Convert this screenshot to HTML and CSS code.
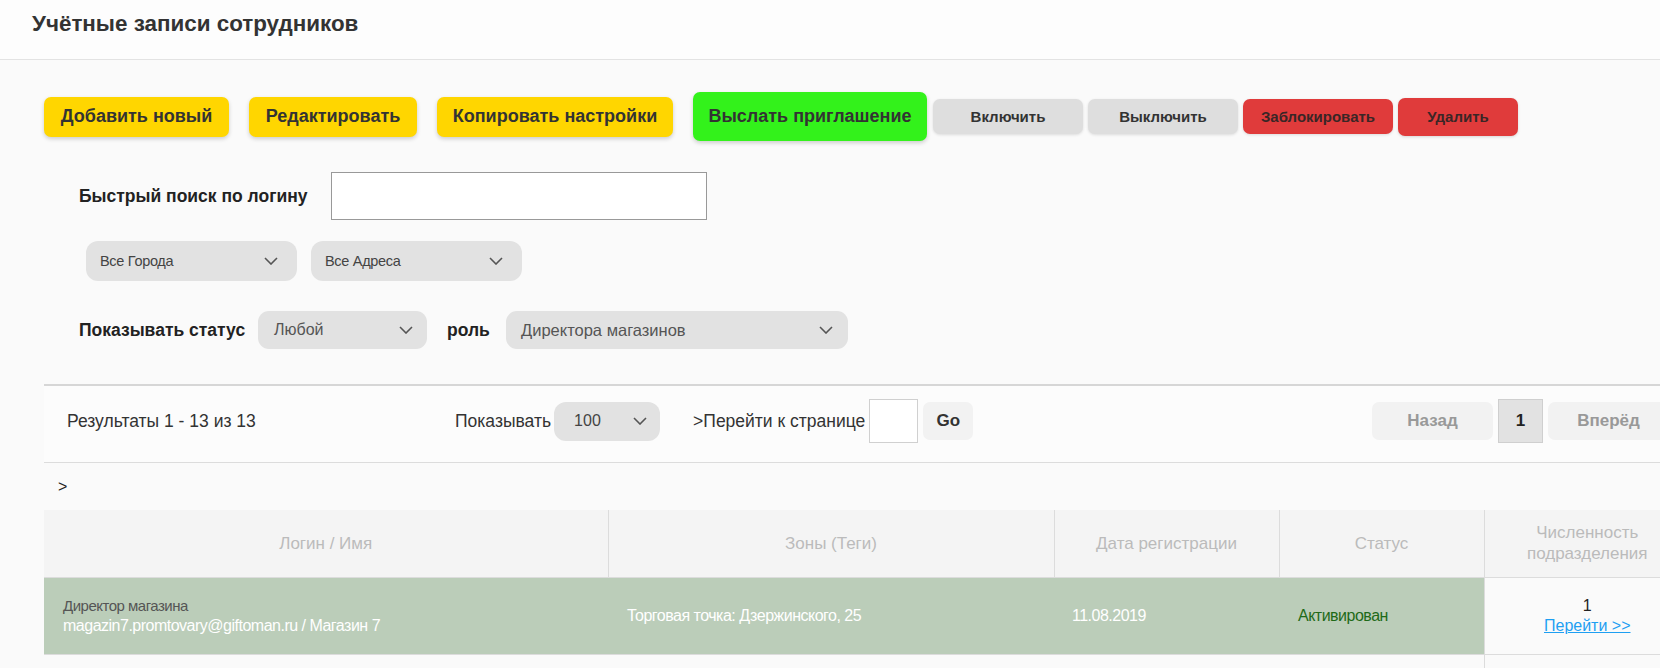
FILE: index.html
```html
<!DOCTYPE html>
<html lang="ru">
<head>
<meta charset="utf-8">
<title>Учётные записи сотрудников</title>
<link rel="stylesheet" href="styles.css">
</head>
<body>
<header class="page-header">
  <h1 class="page-title">Учётные записи сотрудников</h1>
</header>
<main class="content">
  <div class="toolbar">
    <button class="btn btn-yellow btn-add">Добавить новый</button>
    <button class="btn btn-yellow btn-edit">Редактировать</button>
    <button class="btn btn-yellow btn-copy">Копировать настройки</button>
    <button class="btn btn-green">Выслать приглашение</button>
    <button class="btn btn-small btn-gray">Включить</button>
    <button class="btn btn-small btn-gray">Выключить</button>
    <button class="btn btn-small btn-red">Заблокировать</button>
    <button class="btn btn-red btn-delete">Удалить</button>
  </div>

  <div class="search-row">
    <label class="filter-label search-label">Быстрый поиск по логину</label>
    <input class="search-input" type="text">
  </div>

  <div class="select-row">
    <div class="select select-place"><span>Все Города</span><svg class="chevron" width="14" height="8" viewBox="0 0 14 8"><polyline points="1,1 7,7 13,1"/></svg></div>
    <div class="select select-place"><span>Все Адреса</span><svg class="chevron" width="14" height="8" viewBox="0 0 14 8"><polyline points="1,1 7,7 13,1"/></svg></div>
  </div>

  <div class="status-row">
    <label class="filter-label status-label">Показывать статус</label>
    <div class="select select-status"><span>Любой</span><svg class="chevron" width="14" height="8" viewBox="0 0 14 8"><polyline points="1,1 7,7 13,1"/></svg></div>
    <label class="filter-label role-label">роль</label>
    <div class="select select-role"><span>Директора магазинов</span><svg class="chevron" width="14" height="8" viewBox="0 0 14 8"><polyline points="1,1 7,7 13,1"/></svg></div>
  </div>

  <div class="pager">
    <div class="pager-results">Результаты 1 - 13 из 13</div>
    <span class="pager-text">Показывать</span>
    <div class="select select-page"><span>100</span><svg class="chevron" width="14" height="8" viewBox="0 0 14 8"><polyline points="1,1 7,7 13,1"/></svg></div>
    <span class="pager-text pager-goto">&gt;Перейти к странице</span>
    <input class="pager-input" type="text">
    <button class="pager-btn pager-go">Go</button>
    <div class="pager-nav">
      <button class="pager-btn pager-step">Назад</button>
      <span class="pager-current">1</span>
      <button class="pager-btn pager-step">Вперёд</button>
    </div>
  </div>

  <div class="crumb">&gt;</div>

  <table class="grid">
    <colgroup>
      <col class="col-login">
      <col class="col-zones">
      <col class="col-date">
      <col class="col-status">
      <col class="col-count">
    </colgroup>
    <thead>
      <tr>
        <th>Логин / Имя</th>
        <th>Зоны (Теги)</th>
        <th>Дата регистрации</th>
        <th>Статус</th>
        <th class="th-count">Численность<br>подразделения</th>
      </tr>
    </thead>
    <tbody>
      <tr class="row-active">
        <td class="cell-login">
          <div class="role-name">Директор магазина</div>
          <div class="login-name">magazin7.promtovary@giftoman.ru / Магазин 7</div>
        </td>
        <td class="cell-zone">Торговая точка: Дзержинского, 25</td>
        <td class="cell-date">11.08.2019</td>
        <td class="cell-status">Активирован</td>
        <td class="cell-count">
          <div class="count-num">1</div>
          <a class="count-link" href="#">Перейти &gt;&gt;</a>
        </td>
      </tr>
      <tr class="row-next">
        <td></td>
        <td></td>
        <td></td>
        <td></td>
        <td class="cell-count-empty"></td>
      </tr>
    </tbody>
  </table>
</main>
</body>
</html>
```

FILE: styles.css
```css
* {
  box-sizing: border-box;
}

html,
body {
  margin: 0;
  padding: 0;
}

body {
  width: 1660px;
  height: 668px;
  overflow: hidden;
  background: #fafafa;
  font-family: "Liberation Sans", Arial, sans-serif;
  color: #333;
}

.page-header {
  height: 60px;
  padding: 11px 0 0 32px;
  border-bottom: 1px solid #e3e3e3;
  background: #fdfdfd;
}

.page-title {
  margin: 0;
  font-size: 22.4px;
  line-height: 26px;
  font-weight: bold;
  color: #333;
}

.content {
  width: 1690px;
  padding-left: 44px;
}

/* toolbar */
.toolbar {
  display: flex;
  align-items: center;
  height: 49px;
  margin-top: 32px;
}

.btn {
  display: flex;
  align-items: center;
  justify-content: center;
  flex: none;
  padding: 0;
  border: none;
  font-family: inherit;
  font-weight: bold;
  color: #333;
  border-radius: 7px;
}

.btn-yellow {
  height: 40px;
  margin-right: 20px;
  font-size: 18px;
  background: #ffd600;
  box-shadow: 0 2px 4px rgba(0, 0, 0, 0.18);
}

.btn-add { width: 185px; }
.btn-edit { width: 168px; }
.btn-copy { width: 236px; }

.btn-green {
  width: 234px;
  height: 49px;
  margin-right: 6px;
  font-size: 18px;
  background: #33f21b;
  box-shadow: 0 2px 4px rgba(0, 0, 0, 0.18);
}

.btn-small {
  width: 150px;
  height: 35px;
  margin-right: 5px;
  font-size: 15px;
  box-shadow: 0 1px 3px rgba(0, 0, 0, 0.12);
}

.btn-gray { background: #dedede; }

.btn-red {
  background: #e03b3b;
  color: #3a2626;
}

.btn-delete {
  width: 120px;
  height: 38px;
  font-size: 15px;
  box-shadow: 0 1px 3px rgba(0, 0, 0, 0.15);
}

/* filters */
.filter-label {
  flex: none;
  font-size: 17.5px;
  font-weight: bold;
  color: #222;
}

.search-row {
  display: flex;
  align-items: center;
  height: 48px;
  margin-top: 31px;
  padding-left: 35px;
}

.search-label { width: 252px; }

.search-input {
  width: 376px;
  height: 48px;
  border: 1px solid #999;
  background: #fff;
}

.select-row {
  display: flex;
  gap: 14px;
  margin-top: 21px;
  padding-left: 42px;
}

.select {
  display: flex;
  align-items: center;
  justify-content: space-between;
  flex: none;
  background: #e2e2e2;
  color: #555;
}

.chevron {
  flex: none;
}

.chevron polyline {
  fill: none;
  stroke: #555;
  stroke-width: 1.6;
}

.select-place {
  width: 211px;
  height: 40px;
  padding: 0 19px 0 14px;
  border-radius: 12px;
  font-size: 14.5px;
  letter-spacing: -0.3px;
  color: #444;
}

.status-row {
  display: flex;
  align-items: center;
  height: 38px;
  margin-top: 30px;
  padding-left: 35px;
}

.status-label { width: 179px; }

.role-label {
  width: 79px;
  padding-left: 20px;
}

.select-status {
  width: 169px;
  height: 38px;
  padding: 0 14px 0 16px;
  border-radius: 11px;
  font-size: 16px;
}

.select-role {
  width: 342px;
  height: 38px;
  padding: 0 15px 0 15px;
  border-radius: 11px;
  font-size: 16.5px;
}

/* pager */
.pager {
  display: flex;
  align-items: center;
  height: 79px;
  margin-top: 35px;
  padding: 0 21px 6px 23px;
  border-top: 2px solid #d6d6d6;
  border-bottom: 1px solid #dcdcdc;
  background: #fcfcfc;
  font-size: 17.5px;
}

.pager-results {
  width: 388px;
  flex: none;
}

.pager-text {
  flex: none;
  margin-right: 3px;
}

.select-page {
  width: 106px;
  height: 39px;
  padding: 0 13px 0 20px;
  border-radius: 12px;
  font-size: 16px;
  color: #444;
}

.pager-goto {
  margin-left: 33px;
  margin-right: 4px;
}

.pager-input {
  width: 49px;
  height: 44px;
  border: 1px solid #d0d0d0;
  background: #fff;
}

.pager-btn {
  display: flex;
  align-items: center;
  justify-content: center;
  padding: 0;
  border: none;
  border-radius: 7px;
  background: #f2f2f2;
  font-family: inherit;
  font-size: 17px;
  font-weight: bold;
}

.pager-go {
  width: 50px;
  height: 38px;
  margin-left: 5px;
  color: #333;
}

.pager-nav {
  display: flex;
  align-items: center;
  margin-left: auto;
}

.pager-step {
  width: 121px;
  height: 38px;
  color: #999;
}

.pager-current {
  display: flex;
  align-items: center;
  justify-content: center;
  width: 45px;
  height: 44px;
  margin: 0 5px;
  border: 1px solid #cfcfcf;
  background: #e2e2e2;
  font-size: 17px;
  font-weight: bold;
  color: #222;
}

.crumb {
  display: flex;
  align-items: center;
  height: 47px;
  padding-left: 14px;
  font-size: 16px;
  color: #222;
}

/* table */
.grid {
  width: 1646px;
  table-layout: fixed;
  border-collapse: collapse;
}

.col-login { width: 564px; }
.col-zones { width: 446px; }
.col-date { width: 225px; }
.col-status { width: 205px; }
.col-count { width: 206px; }

.grid th {
  height: 67px;
  padding: 0;
  background: #f4f4f4;
  border-bottom: 1px solid #dcdcdc;
  border-right: 1px solid #dcdcdc;
  font-size: 17px;
  font-weight: normal;
  line-height: 21px;
  color: #bbb;
  text-align: center;
}

.grid th.th-count {
  border-right: none;
}

.row-active td {
  height: 77px;
  padding: 0 0 0 19px;
  background: #bbcdb9;
  border-bottom: 1px solid #dcdcdc;
  font-size: 16px;
  letter-spacing: -0.5px;
  color: #fff;
  vertical-align: middle;
}

.row-active td.cell-login {
  padding-left: 19px;
}

.role-name {
  font-size: 15px;
  line-height: 20px;
  color: #555;
}

.login-name {
  font-size: 16px;
  line-height: 20px;
  color: #fff;
}

.row-active td.cell-date {
  padding-left: 18px;
}

.row-active td.cell-status {
  color: #1f6a18;
}

.row-active td.cell-count {
  padding: 0;
  background: #fafafa;
  border-left: 1px solid #dcdcdc;
  text-align: center;
  letter-spacing: 0;
}

.count-num {
  font-size: 16px;
  line-height: 20px;
  color: #222;
}

.count-link {
  font-size: 16px;
  line-height: 20px;
  color: #1e9ff2;
  text-decoration: underline;
}

.row-next td {
  height: 40px;
  padding: 0;
}

.row-next td.cell-count-empty {
  border-left: 1px solid #dcdcdc;
}
```
